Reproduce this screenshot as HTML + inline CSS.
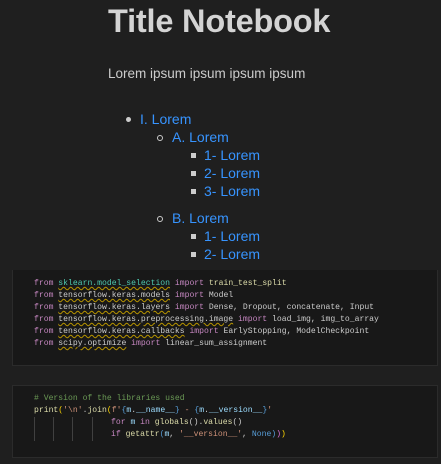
<!DOCTYPE html>
<html><head><style>
body{margin:0;width:441px;height:464px;background:#1f1f1f;overflow:hidden;font-family:"Liberation Sans",sans-serif;position:relative}
.a{position:absolute;white-space:pre}
h1{position:absolute;left:108px;top:3px;margin:0;font-size:32.5px;color:#d4d4d4;font-weight:bold;letter-spacing:-0.2px}
.p{left:108px;top:66px;font-size:13.5px;color:#cccccc}
.l{font-size:14px;color:#3794ff}
.dot{position:absolute;width:5px;height:5px;background:#ccc;border-radius:50%}
.cir{position:absolute;width:4px;height:4px;border:1px solid #ccc;border-radius:50%}
.sq{position:absolute;width:5px;height:5px;background:#ccc}
.cell{position:absolute;left:12px;width:424px;background:#181818;border:1px solid #2b2b2b}
.c{font-family:"Liberation Mono",monospace;font-size:8.1px;color:#cccccc;left:34px}
.k{color:#c586c0}.m{color:#4ec9b0;text-decoration:underline wavy #b89500;text-decoration-thickness:1px}.cm{color:#6a9955}.s{color:#ce9178}.f{color:#dcdcaa}.v{color:#9cdcfe}.b{color:#569cd6}.y{color:#ffd700}
</style></head><body>
<h1>Title Notebook</h1>
<div class="a p">Lorem ipsum ipsum ipsum ipsum</div>
<div class="dot" style="left:126px;top:117px"></div><div class="a l" style="left:140px;top:111px">I. Lorem</div>
<div class="cir" style="left:157px;top:135px"></div><div class="a l" style="left:172px;top:129px">A. Lorem</div>
<div class="sq" style="left:191px;top:153px"></div><div class="a l" style="left:204px;top:147px">1- Lorem</div>
<div class="sq" style="left:191px;top:171px"></div><div class="a l" style="left:204px;top:165px">2- Lorem</div>
<div class="sq" style="left:191px;top:189px"></div><div class="a l" style="left:204px;top:183px">3- Lorem</div>
<div class="cir" style="left:157px;top:216px"></div><div class="a l" style="left:172px;top:210px">B. Lorem</div>
<div class="sq" style="left:191px;top:234px"></div><div class="a l" style="left:204px;top:228px">1- Lorem</div>
<div class="sq" style="left:191px;top:252px"></div><div class="a l" style="left:204px;top:246px">2- Lorem</div>
<div class="cell" style="top:270px;height:95px;border-top:none"></div>
<div class="a c" style="top:279px"><span class="k">from</span> <span class="m">sklearn.model_selection</span> <span class="k">import</span> <span class="f">train_test_split</span></div>
<div class="a c" style="top:291px"><span class="k">from</span> <span class="m" style="color:#ccc">tensorflow.keras.models</span> <span class="k">import</span> Model</div>
<div class="a c" style="top:303px"><span class="k">from</span> <span class="m" style="color:#ccc">tensorflow.keras.layers</span> <span class="k">import</span> Dense, Dropout, concatenate, Input</div>
<div class="a c" style="top:315px"><span class="k">from</span> <span class="m" style="color:#ccc">tensorflow.keras.preprocessing.image</span> <span class="k">import</span> load_img, img_to_array</div>
<div class="a c" style="top:327px"><span class="k">from</span> <span class="m" style="color:#ccc">tensorflow.keras.callbacks</span> <span class="k">import</span> EarlyStopping, ModelCheckpoint</div>
<div class="a c" style="top:339px"><span class="k">from</span> <span class="m" style="color:#ccc">scipy.optimize</span> <span class="k">import</span> linear_sum_assignment</div>
<div class="cell" style="top:385px;height:71px"></div>
<div class="a c" style="top:394px"><span class="cm"># Version of the libraries used</span></div>
<div class="a c" style="top:406px"><span class="f">print</span><span class="y">(</span><span class="s">'\n'</span>.<span class="f">join</span><span class="y">(</span><span class="s">f'</span><span class="b">{</span><span class="v">m</span>.<span class="v">__name__</span><span class="b">}</span><span class="s"> - </span><span class="b">{</span><span class="v">m</span>.<span class="v">__version__</span><span class="b">}</span><span class="s">'</span></div>
<div class="a c" style="top:418px;left:111px"><span class="k">for</span> <span class="v">m</span> <span class="k">in</span> <span class="f">globals</span>().<span class="f">values</span>()</div>
<div class="a c" style="top:430px;left:111px"><span class="k">if</span> <span class="f">getattr</span><span class="b">(</span><span class="v">m</span>, <span class="s">'__version__'</span>, <span class="b">None</span><span class="b">)</span><span style="color:#da70d6">)</span><span class="y">)</span></div>
<div style="position:absolute;left:34px;top:417px;width:1px;height:24px;background:#404040"></div>
<div style="position:absolute;left:53px;top:417px;width:1px;height:24px;background:#404040"></div>
<div style="position:absolute;left:72px;top:417px;width:1px;height:24px;background:#404040"></div>
<div style="position:absolute;left:92px;top:417px;width:1px;height:24px;background:#404040"></div>
</body></html>
